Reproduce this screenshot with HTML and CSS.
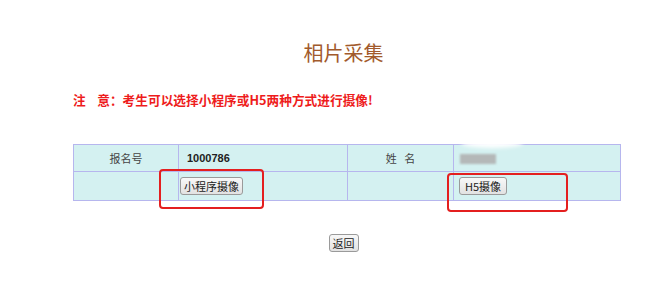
FILE: index.html
```html
<!DOCTYPE html>
<html lang="zh">
<head>
<meta charset="utf-8">
<title>相片采集</title>
<link rel="stylesheet" href="styles.css">
</head>
<body>
<div class="page">
  <h1 class="title">相片采集</h1>
  <p class="notice">注&nbsp;&nbsp;&nbsp;&nbsp;意：考生可以选择小程序或H5两种方式进行摄像!</p>
  <div class="table-wrap">
    <table class="info">
      <colgroup>
        <col class="w1"><col class="w2"><col class="w3"><col class="w4">
      </colgroup>
      <tr class="row-top">
        <td class="label">报名号</td>
        <td class="value num">1000786</td>
        <td class="label">姓&nbsp;&nbsp;&nbsp;名</td>
        <td class="value"><span class="blurred"></span></td>
      </tr>
      <tr class="row-bottom">
        <td></td>
        <td class="btn-cell-left"><button class="btn btn-mini">小程序摄像</button></td>
        <td></td>
        <td class="btn-cell-right"><button class="btn btn-h5">H5摄像</button></td>
      </tr>
    </table>
    <div class="mark mark-left"></div>
    <div class="mark mark-right"></div>
    <div class="smear"></div>
  </div>
  <div class="back-row"><button class="btn back">返回</button></div>
</div>
</body>
</html>
```
FILE: styles.css
```css
html, body {
  margin: 0;
  padding: 0;
  background: #ffffff;
}
body {
  font-family: "Liberation Sans", "Noto Sans CJK SC", sans-serif;
}
.page {
  width: 547px;
  margin-left: 73px;
  padding-top: 41px;
}
.title {
  margin: 0;
  font-family: "Noto Sans CJK SC", sans-serif;
  font-weight: normal;
  font-size: 20px;
  line-height: 24px;
  color: #a25a2c;
  text-align: center;
  padding-right: 6px;
}
.notice {
  margin: 27px 0 0 0;
  font-family: "Noto Sans CJK SC", sans-serif;
  font-size: 12.7px;
  line-height: 16px;
  font-weight: bold;
  color: #ee1c1c;
}
.table-wrap {
  position: relative;
  margin-top: 36px;
}
.info {
  width: 547px;
  table-layout: fixed;
  border-collapse: collapse;
  background: #d4f1f1;
  font-size: 11px;
  color: #333;
}
.w1 { width: 105px; }
.w2 { width: 169px; }
.w3 { width: 106px; }
.w4 { width: 167px; }
.info td {
  border: 1px solid #b6b6ee;
  padding: 0;
}
.row-top td { height: 26px; }
.row-bottom td { height: 28px; }
.label {
  text-align: center;
  font-family: "Noto Sans CJK SC", sans-serif;
  color: #444;
}
.value {
  padding-left: 8px !important;
}
.num {
  font-weight: bold;
  color: #222;
}
.blurred {
  display: inline-block;
  width: 36px;
  height: 10px;
  background: #b4b8b8;
  filter: blur(1px);
  vertical-align: middle;
  margin-left: -2px;
}
.btn-cell-left { padding-left: 1px !important; }
.btn-cell-right { padding-left: 5px !important; }
.btn {
  font-family: "Noto Sans CJK SC", sans-serif;
  font-size: 11px;
  line-height: 14px;
  height: 18px;
  padding: 0 3px;
  background: linear-gradient(#f8f8f8, #e2e2e2);
  border: 1px solid #9a9a9a;
  border-radius: 3px;
  color: #222;
  vertical-align: middle;
}
.btn-h5 { padding: 0 5px; }
.mark {
  position: absolute;
  border: 2px solid #e41f1f;
  border-radius: 4px;
  box-sizing: border-box;
}
.mark-left {
  left: 86px;
  top: 25px;
  width: 105px;
  height: 40px;
}
.mark-right {
  left: 374px;
  top: 29px;
  width: 121px;
  height: 39px;
}
.smear {
  position: absolute;
  left: 388px;
  top: -6px;
  width: 62px;
  height: 10px;
  background: #ffffff;
  border-radius: 50%;
  filter: blur(2px);
}
.back-row {
  text-align: center;
  margin-top: 32px;
  padding-right: 6px;
}
.back {
  height: 18px;
  padding: 0 3px;
  font-size: 11px;
}
```
